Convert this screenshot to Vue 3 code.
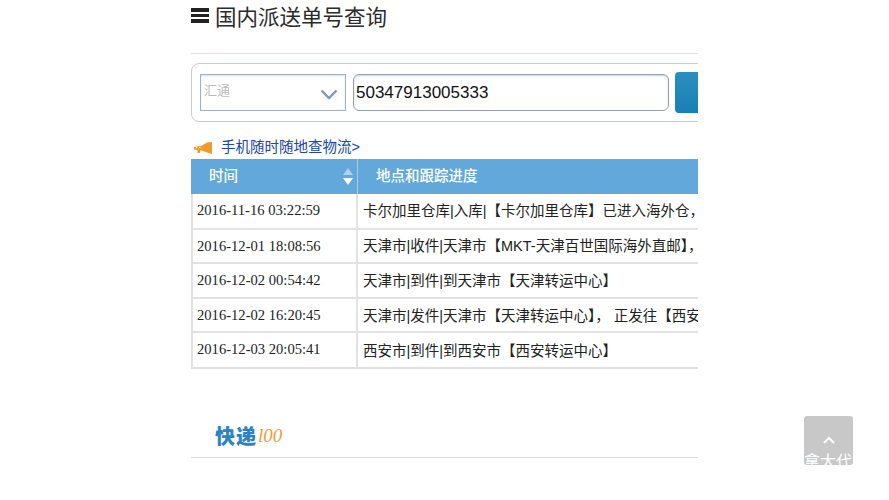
<template>
  <div class="page">
    <div class="wrap">
      <h2 class="title">
        <span class="burger"><i></i><i></i><i></i></span>
        国内派送单号查询
      </h2>
      <div class="rule"></div>
      <div class="search">
        <div class="select">
          <span>汇通</span>
          <svg width="18" height="11" viewBox="0 0 18 11">
            <path d="M1.5 1.5 L9 9 L16.5 1.5" fill="none" stroke="#7d9bb5" stroke-width="2.4" />
          </svg>
        </div>
        <div class="input">50347913005333</div>
        <div class="btn"></div>
      </div>
      <div class="mobile">
        <svg width="20" height="14" viewBox="0 0 20 14">
          <path d="M1 6 L9 4.5 L14 1.5 L19 1 L19 13 L14 11.5 L9 9.5 L7 9.5 L7 12 L4.5 12 L4.5 9 L1 8.5 Z" fill="#f0982a" />
          <path d="M3 6.5 h1.5 M6 6.5 h1.5" stroke="#fff3d0" stroke-width="1.4" />
        </svg>
        <a>手机随时随地查物流&gt;</a>
      </div>
      <div class="table">
        <div class="thead">
          <div class="th time">
            时间
            <span class="sort"><b class="up"></b><b class="down"></b></span>
          </div>
          <div class="th place">地点和跟踪进度</div>
        </div>
        <div v-for="row in rows" :key="row.time" class="tr">
          <div class="td time">{{ row.time }}</div>
          <div class="td place">{{ row.text }}</div>
        </div>
      </div>
      <div class="logo">
        <span class="kd">快递</span><span class="num">l00</span>
      </div>
      <div class="foot-line"></div>
    </div>
    <div class="totop">
      <svg width="12" height="8" viewBox="0 0 12 8">
        <path d="M1 7 L6 2 L11 7" fill="none" stroke="#fff" stroke-width="2.2" />
      </svg>
      <span class="mark">拿大代</span>
    </div>
  </div>
</template>

<script setup>
const rows = [
  { time: '2016-11-16 03:22:59', text: '卡尔加里仓库|入库|【卡尔加里仓库】已进入海外仓，' },
  { time: '2016-12-01 18:08:56', text: '天津市|收件|天津市【MKT-天津百世国际海外直邮】，' },
  { time: '2016-12-02 00:54:42', text: '天津市|到件|到天津市【天津转运中心】' },
  { time: '2016-12-02 16:20:45', text: '天津市|发件|天津市【天津转运中心】， 正发往【西安转运中心】' },
  { time: '2016-12-03 20:05:41', text: '西安市|到件|到西安市【西安转运中心】' },
]
</script>

<style>
html, body {
  margin: 0;
  background: #fff;
  overflow: hidden;
}
</style>

<style scoped>
.page {
  position: relative;
  width: 889px;
  height: 500px;
  overflow: hidden;
  background: #fff;
  font-family: "Liberation Sans", "Noto Sans CJK SC", sans-serif;
}
.wrap {
  width: 507px;
  margin-left: 191px;
  overflow: hidden;
}
.title {
  display: flex;
  align-items: center;
  gap: 6px;
  height: 31px;
  margin: 0;
  font-size: 21.5px;
  font-weight: 400;
  color: #2b2b2b;
}
.burger {
  display: flex;
  flex-direction: column;
  gap: 2px;
  width: 18px;
}
.burger i {
  display: block;
  height: 3.5px;
  background: #222;
}
.rule {
  height: 1px;
  margin-top: 22px;
  background: #e2e2e2;
}
.search {
  display: flex;
  align-items: center;
  width: 540px;
  height: 57px;
  margin-top: 9px;
  padding-left: 8px;
  border: 1px solid #c9ced3;
  border-radius: 8px;
}
.select {
  display: flex;
  align-items: center;
  justify-content: space-between;
  width: 146px;
  height: 37px;
  margin-right: 7px;
  box-sizing: border-box;
  padding: 0 7px 6px 3px;
  border: 1px solid #9fb2c6;
  box-shadow: inset 0 1px 2px #d5dde5;
  color: #bcbcbc;
  font-size: 13px;
}
.select svg {
  margin-top: 9px;
}
.input {
  display: flex;
  align-items: center;
  width: 316px;
  height: 37px;
  margin-right: 6px;
  box-sizing: border-box;
  padding-left: 2px;
  border: 1px solid #8fa3b8;
  border-radius: 6px;
  box-shadow: inset 0 1px 2px #c5d0db;
  color: #111;
  font-size: 17px;
}
.btn {
  flex: none;
  width: 60px;
  height: 41px;
  border-radius: 4px;
  background: linear-gradient(#2a8fbf, #1a80b4);
}
.mobile {
  display: flex;
  align-items: center;
  height: 22px;
  margin-top: 12px;
  padding-left: 2px;
}
.mobile svg {
  margin-top: 5px;
  margin-right: 8px;
}
.mobile a {
  color: #2046a8;
  font-size: 14.5px;
}
.table {
  width: 507px;
  margin-top: 3px;
  border-bottom: 2px solid #e2e2e2;
}
.thead {
  display: flex;
  height: 35px;
  background: #62a8da;
  color: #fff;
  font-size: 14.5px;
  font-weight: 500;
  line-height: 35px;
}
.th.time {
  position: relative;
  width: 167px;
  padding-left: 18px;
  box-sizing: border-box;
  border-right: 1px solid #a5cdea;
}
.th.place {
  padding-left: 18px;
}
.sort {
  position: absolute;
  right: 4px;
  top: 9px;
  display: flex;
  flex-direction: column;
  gap: 3px;
}
.sort b {
  display: block;
  width: 0;
  height: 0;
  border-left: 5px solid transparent;
  border-right: 5px solid transparent;
}
.sort .up {
  border-bottom: 7px solid #b5cfe2;
}
.sort .down {
  border-top: 7px solid #fff;
}
.tr {
  display: flex;
  height: 34.6px;
  box-sizing: border-box;
  border-left: 2px solid #e2e2e2;
  border-bottom: 2px solid #e2e2e2;
  align-items: center;
  white-space: nowrap;
}
.tr:nth-child(2) {
  height: 35.6px;
}
.tr:last-child {
  height: 33.6px;
  border-bottom: 0;
}
.td.time {
  width: 165px;
  flex: none;
  padding-left: 4px;
  box-sizing: border-box;
  font-family: "Liberation Serif", "Noto Sans CJK SC", serif;
  font-size: 14.6px;
  color: #222;
  height: 100%;
  line-height: 33px;
  border-right: 2px solid #e2e2e2;
}
.td.place {
  padding: 0 0 2px 5px;
  font-size: 14.5px;
  color: #222;
}
.logo {
  display: flex;
  align-items: center;
  height: 24px;
  margin-top: 55px;
  padding-left: 24px;
}
.kd {
  color: #2d82c6;
  font-size: 20px;
  font-weight: 900;
  letter-spacing: 1px;
}
.num {
  color: #ef9a3c;
  font-family: "Liberation Serif", serif;
  font-style: italic;
  font-size: 19px;
  margin-left: 1px;
}
.foot-line {
  height: 1px;
  margin-top: 9px;
  background: #dcdcdc;
}
.totop {
  position: absolute;
  left: 804px;
  top: 416px;
  width: 49px;
  height: 49px;
  border-radius: 3px;
  overflow: hidden;
  background: #c8c8c8;
  display: flex;
  justify-content: center;
  padding-top: 20px;
  box-sizing: border-box;
}
.totop svg {
  display: block;
}
.mark {
  position: absolute;
  left: 0;
  top: 37px;
  white-space: nowrap;
  color: #fff;
  font-size: 16px;
  line-height: 18px;
}
</style>
